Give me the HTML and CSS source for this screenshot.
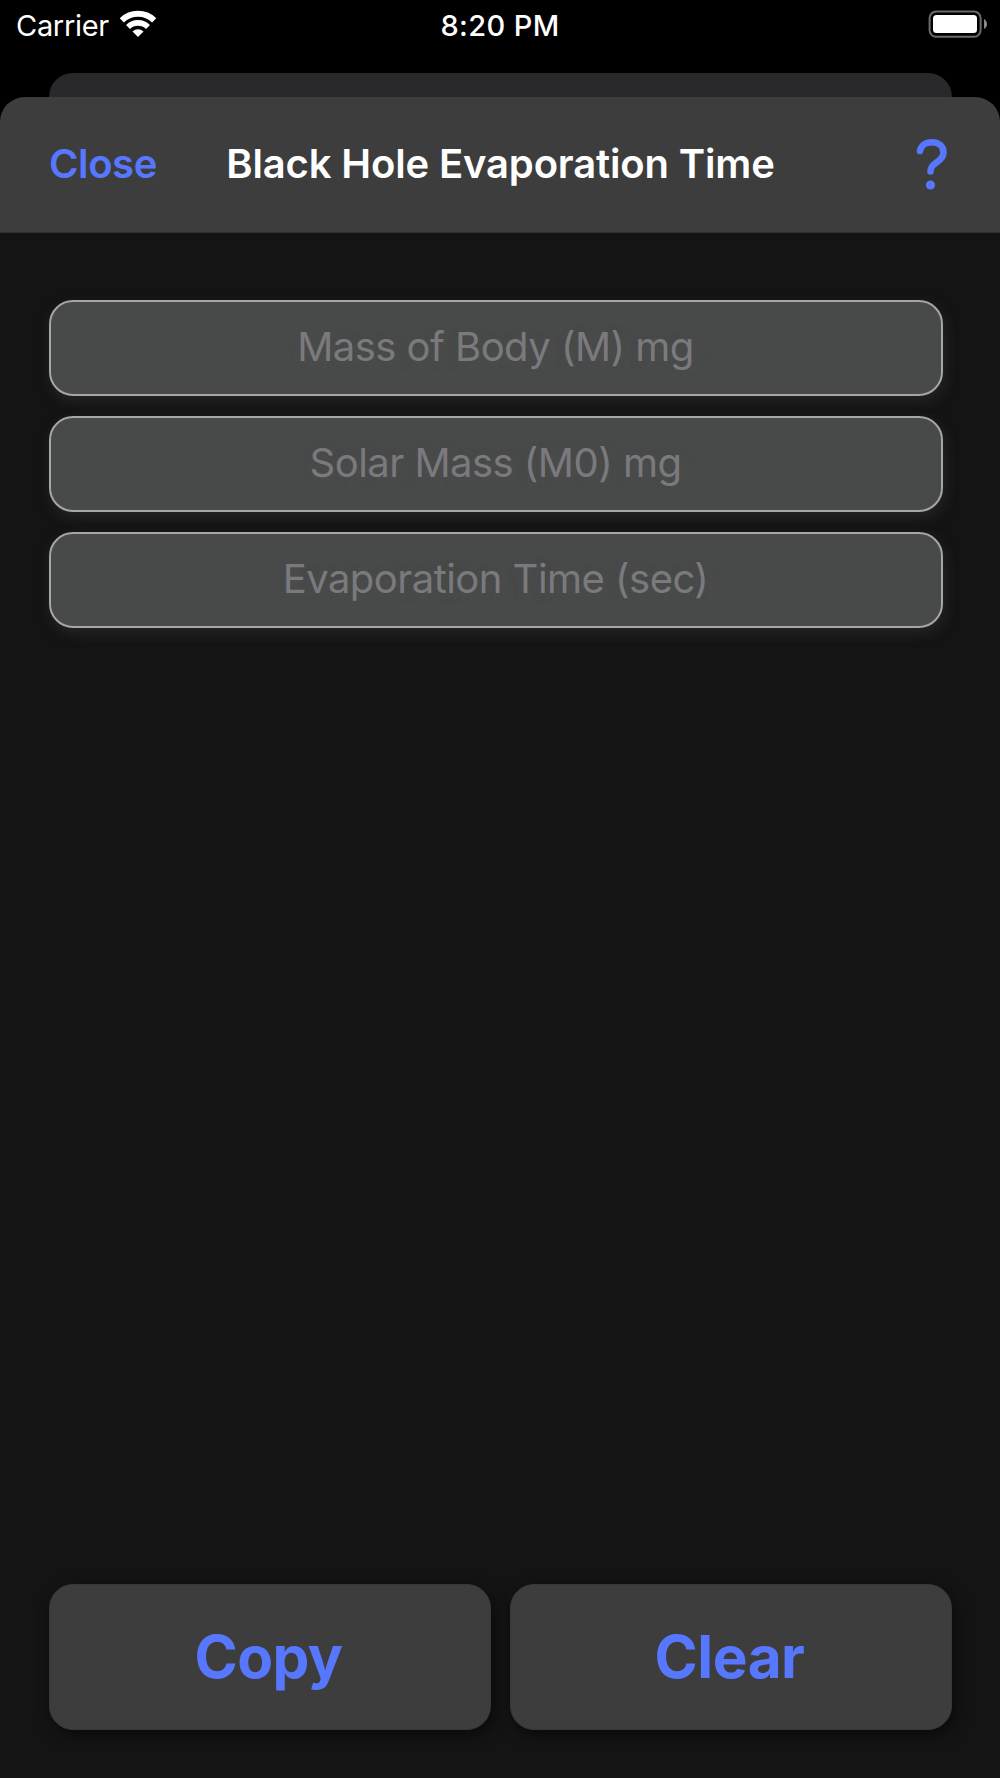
FILE: index.html
```html
<!DOCTYPE html>
<html lang="en">
<head>
  <meta charset="UTF-8">
  <meta name="viewport" content="width=device-width, initial-scale=1.0">
  <title>Black Hole Evaporation Time</title>
  <link rel="stylesheet" href="styles.css">
</head>
<body>

  <div class="status-bar">
    <div class="status-left">
      <span class="carrier">Carrier</span>
      <svg class="wifi" width="38" height="28" viewBox="0 0 38 28">
        <path d="M2.8 10.3 A23.5 23.5 0 0 1 35.2 10.3" fill="none" stroke="#fff" stroke-width="6"/>
        <path d="M9 16.9 A14.4 14.4 0 0 1 29 16.9" fill="none" stroke="#fff" stroke-width="5.6"/>
        <path d="M13.5 21.5 A8 8 0 0 1 24.5 21.5 L19 27 Z" fill="#fff"/>
      </svg>
    </div>
    <span class="time">8:20 PM</span>
    <svg class="battery" width="60" height="28" viewBox="0 0 60 28">
      <rect x="1.6" y="1.6" width="51" height="25.2" rx="6.5" fill="none" stroke="#6b6b6b" stroke-width="2"/>
      <rect x="5" y="5" width="44" height="18" rx="3.5" fill="#fff"/>
      <path d="M56 9 C60 11 60 17 56 19 Z" fill="#8a8a8a"/>
    </svg>
  </div>

  <div class="back-card"></div>

  <div class="sheet">
    <div class="header">
      <span class="close">Close</span>
      <h1 class="title">Black Hole Evaporation Time</h1>
      <svg class="help" width="32" height="54" viewBox="0 0 32 54">
        <path d="M4 14 C5 8.5 9.500 5.200 15.500 5.200 C22.500 5.200 27.500 9 27.500 15.500 C27.500 20 25 22.500 20.500 25.500 C16 28.500 14.500 30.500 14.500 34.500" fill="none" stroke="#5877ff" stroke-width="6.600" stroke-linecap="round"/>
        <circle cx="14.500" cy="48" r="4.600" fill="#5877ff"/>
      </svg>
    </div>

    <div class="fields">
      <input class="field mass" type="text" placeholder="Mass of Body (M) mg">
      <input class="field solar" type="text" placeholder="Solar Mass (M0) mg">
      <input class="field evaporation" type="text" placeholder="Evaporation Time (sec)">
    </div>

    <div class="buttons">
      <button class="copy">Copy</button>
      <button class="clear">Clear</button>
    </div>
  </div>

</body>
</html>
```
FILE: styles.css
```css
* {
  box-sizing: border-box;
}

body {
  margin: 0;
  height: 1778px;
  display: flex;
  flex-direction: column;
  background: #000;
  color: #fff;
  font-family: Inter, "Liberation Sans", sans-serif;
  overflow: hidden;
}

.status-bar {
  height: 72.5px;
  padding: 10px 12px 0 16px;
  display: grid;
  grid-template-columns: 1fr auto 1fr;
  align-items: start;
  line-height: 31px;
  font-size: 29px;
}

.status-left {
  display: flex;
  gap: 10.5px;
}

.carrier {
  letter-spacing: -0.3px;
}

.time {
  margin-right: 4px;
  font-weight: 500;
  letter-spacing: 0.4px;
}

.battery {
  justify-self: end;
}

.back-card {
  height: 24.5px;
  margin: 0 48.5px;
  background: #29292b;
  border-radius: 24px 24px 0 0;
}

.sheet {
  flex: 1;
  display: flex;
  flex-direction: column;
  background: #141414;
  border-radius: 25px 25px 0 0;
  overflow: hidden;
}

.header {
  height: 136px;
  padding: 0 52px 2px 49px;
  display: grid;
  grid-template-columns: 1fr auto 1fr;
  align-items: center;
  background: #3d3d3d;
  border-bottom: 1px solid #303030;
}

.close {
  color: #5877ff;
  font-size: 40px;
  font-weight: 600;
  letter-spacing: -0.4px;
}

.title {
  margin: 0 0 0 4px;
  font-size: 40px;
  font-weight: 600;
  letter-spacing: -0.15px;
}

.help {
  justify-self: end;
}

.fields {
  padding: 67px 57.5px 0 48.5px;
  display: flex;
  flex-direction: column;
  gap: 20px;
}

.field {
  width: 100%;
  height: 96px;
  padding: 0 0 3px;
  border: 2px solid #a6a6a6;
  border-radius: 24px;
  background: #484a49;
  box-shadow: 2px 5px 14px rgba(90, 90, 90, 0.25);
  color: #fff;
  font-family: inherit;
  font-size: 40px;
  letter-spacing: -0.54px;
  text-align: center;
}

.field::placeholder {
  color: #7a7a7e;
  opacity: 1;
  text-shadow: 4px 5px 14px rgba(100, 100, 100, 0.25);
}

.buttons {
  margin-top: auto;
  padding: 0 48.5px 48px;
  display: grid;
  grid-template-columns: 1fr 1fr;
  gap: 19px;
}

.buttons button {
  height: 146px;
  padding: 0 2px 2px 0;
  border: 1px solid #383838;
  border-radius: 24px;
  background: #3d3d3d;
  box-shadow: 3px 5px 14px rgba(0, 0, 0, 0.5);
  color: #5877ff;
  font-family: inherit;
  font-size: 58.5px;
  font-weight: 700;
  letter-spacing: -0.5px;
}
```
